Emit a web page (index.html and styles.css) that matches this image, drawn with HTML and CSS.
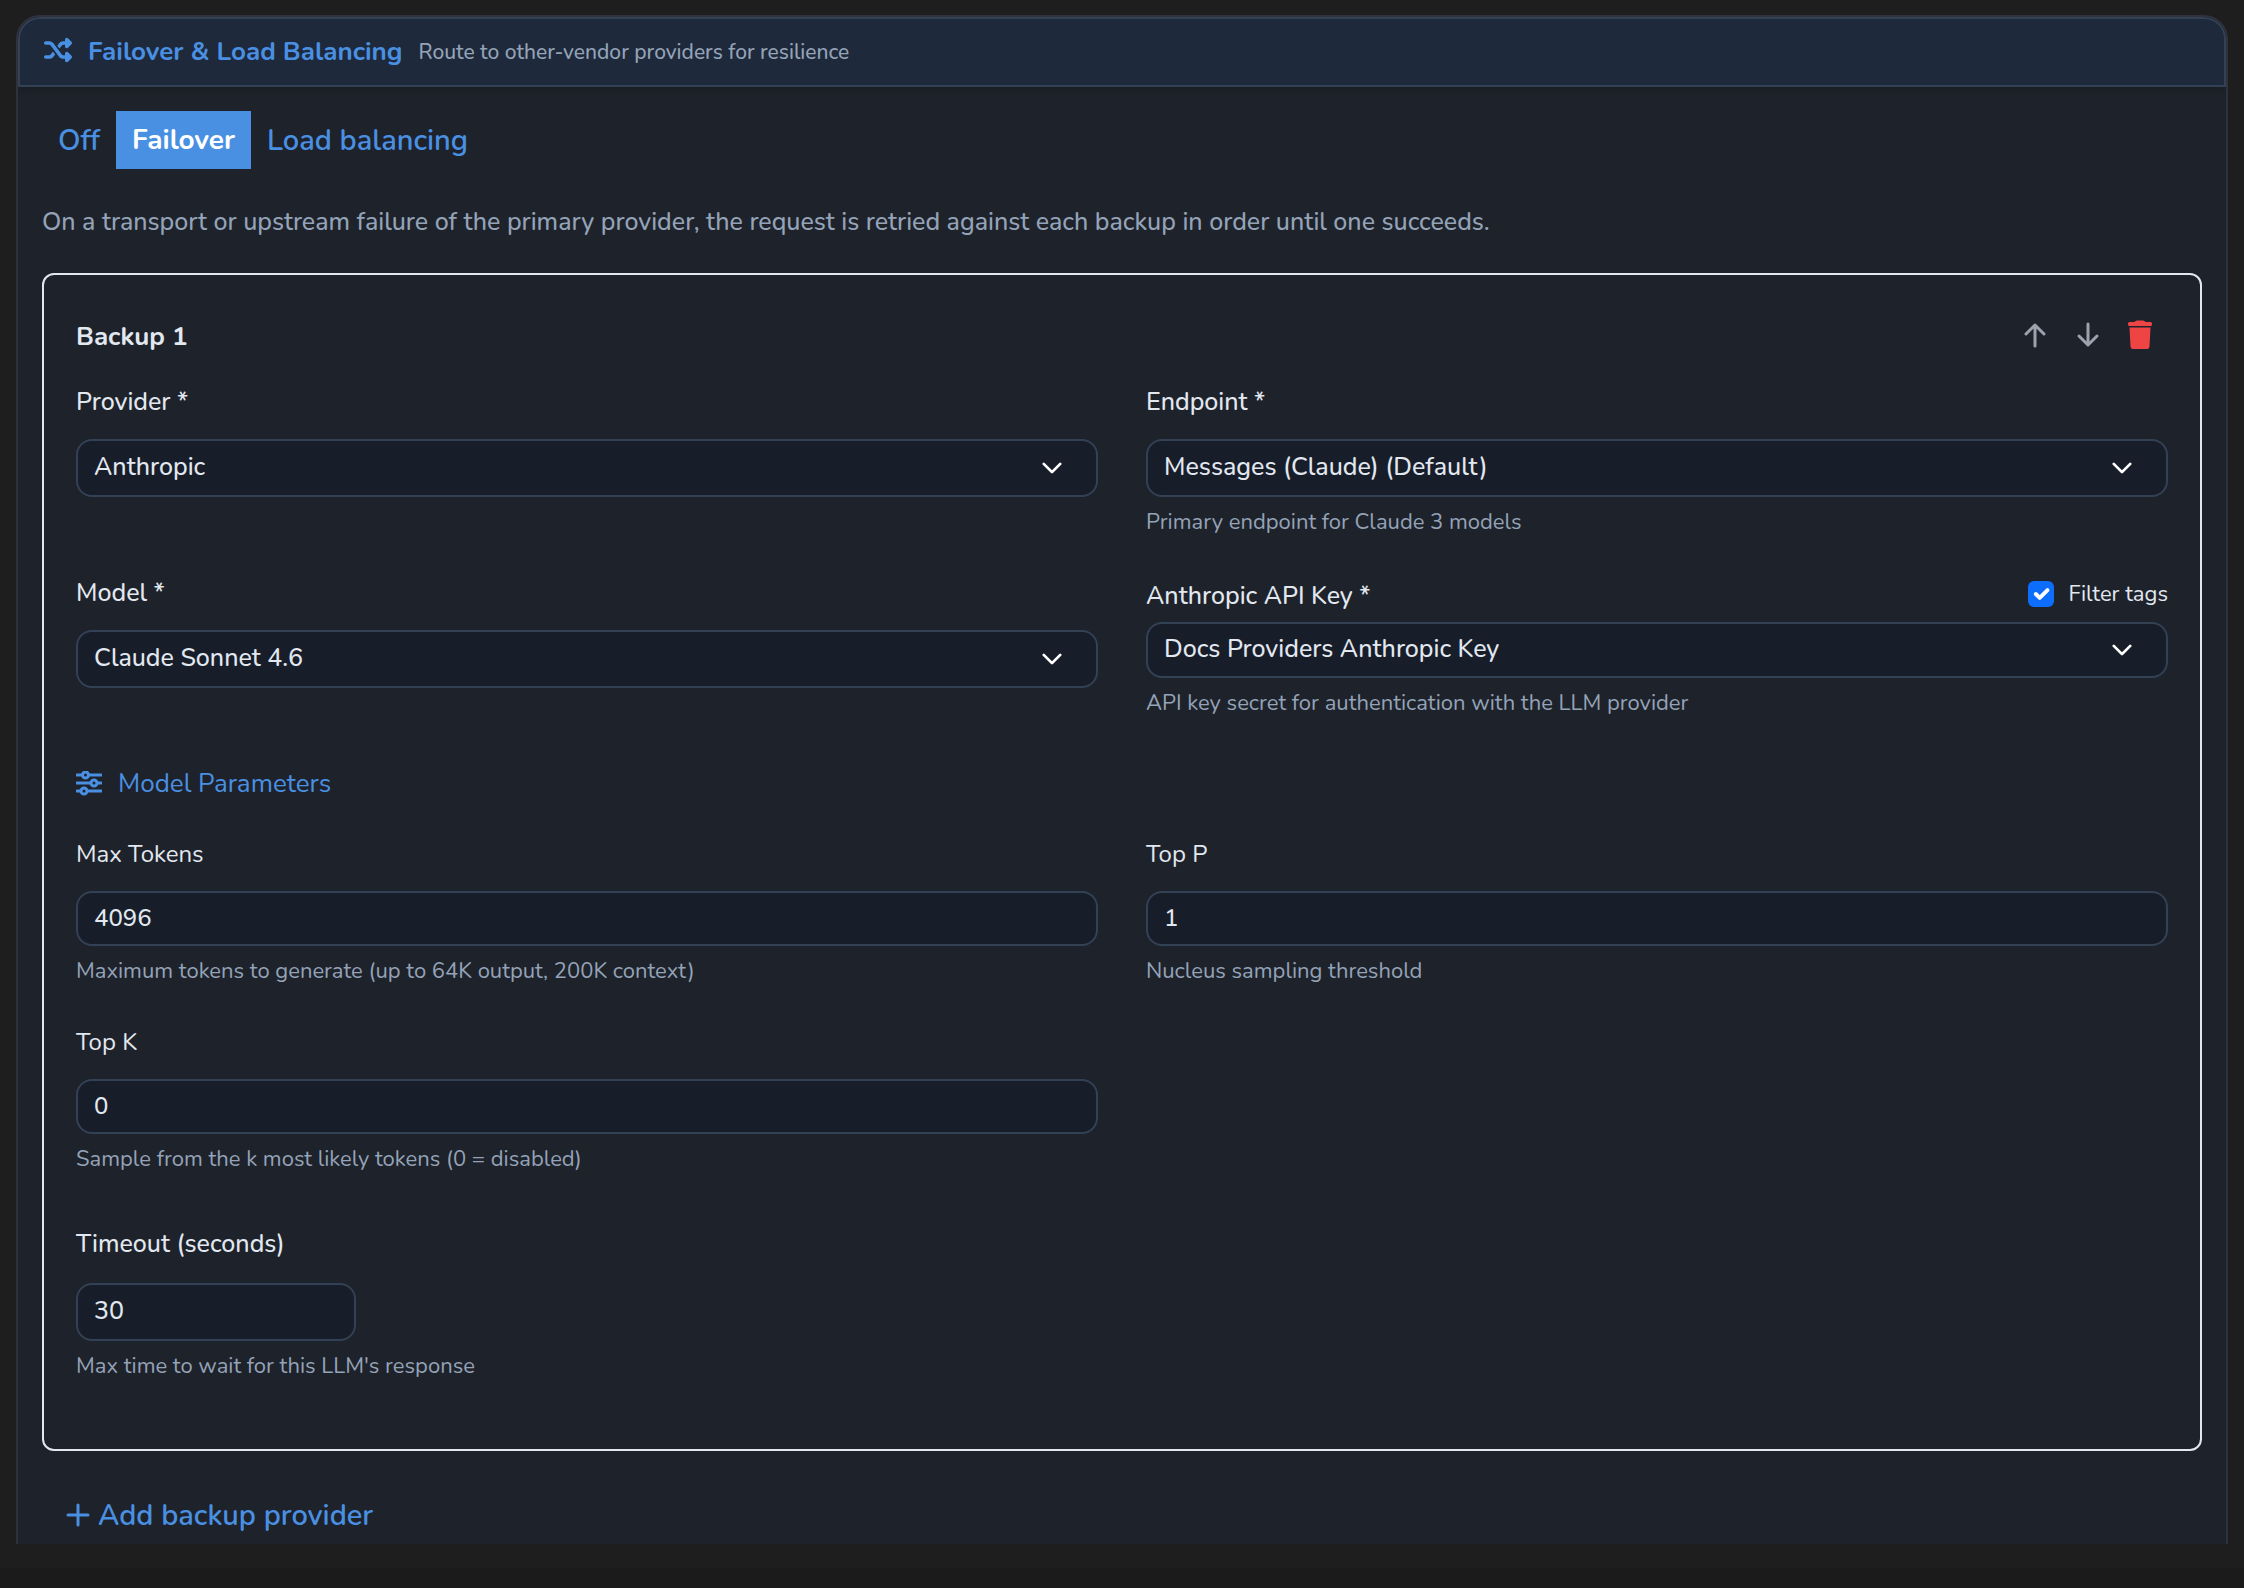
FILE: index.html
```html
<!DOCTYPE html>
<html lang="en">
<head>
    <meta charset="UTF-8">
    <meta name="viewport" content="width=device-width, initial-scale=1.0">
    <title>Failover &amp; Load Balancing</title>
    <link rel="stylesheet" href="styles.css">
</head>
<body>
    <main class="panel">
        <header class="panel-header">
            <svg class="icon-shuffle" viewBox="0 0 512 512" aria-hidden="true">
                <path fill="currentColor" d="M403.8 34.4c12-5 25.7-2.2 34.9 6.9l64 64c6 6 9.4 14.1 9.4 22.6s-3.4 16.6-9.4 22.6l-64 64c-9.2 9.2-22.9 11.9-34.9 6.9s-19.8-16.6-19.8-29.6V160H352c-10.1 0-19.6 4.7-25.6 12.8L284 229.3 244 176l31.2-41.6C293.3 110.2 321.8 96 352 96h32V64c0-12.9 7.8-24.6 19.8-29.6zM164 282.7L204 336l-31.2 41.6C154.7 401.8 126.2 416 96 416H32c-17.7 0-32-14.3-32-32s14.3-32 32-32H96c10.1 0 19.6-4.7 25.6-12.8L164 282.7zm274.6 188c-9.2 9.2-22.9 11.9-34.9 6.9s-19.8-16.6-19.8-29.6V416H352c-30.2 0-58.7-14.2-76.8-38.4L121.6 172.8c-6-8.1-15.5-12.8-25.6-12.8H32c-17.7 0-32-14.3-32-32s14.3-32 32-32H96c30.2 0 58.7 14.2 76.8 38.4L326.4 339.2c6 8.1 15.5 12.8 25.6 12.8h32V320c0-12.9 7.8-24.6 19.8-29.6s25.7-2.2 34.9 6.9l64 64c6 6 9.4 14.1 9.4 22.6s-3.4 16.6-9.4 22.6l-64 64z"/>
            </svg>
            <h1>Failover &amp; Load Balancing</h1>
            <span class="subtitle">Route to other-vendor providers for resilience</span>
        </header>

        <div class="panel-body">
            <div class="mode-tabs">
                <button type="button" class="mode-btn">Off</button>
                <button type="button" class="mode-btn active">Failover</button>
                <button type="button" class="mode-btn">Load balancing</button>
            </div>

            <p class="mode-description">On a transport or upstream failure of the primary provider, the request is retried against each backup in order until one succeeds.</p>

            <section class="backup-card">
                <div class="card-header">
                    <h2>Backup 1</h2>
                    <div class="card-actions">
                        <button type="button" class="icon-btn" aria-label="Move up">
                            <svg viewBox="0 0 28 28" aria-hidden="true"><path d="M14 25V4M5 13l9-9 9 9"/></svg>
                        </button>
                        <button type="button" class="icon-btn" aria-label="Move down">
                            <svg viewBox="0 0 28 28" aria-hidden="true"><path d="M14 3v21M5 15l9 9 9-9"/></svg>
                        </button>
                        <button type="button" class="icon-btn delete" aria-label="Delete backup">
                            <svg viewBox="0 0 26 30" aria-hidden="true"><path d="M2.500 2H7.500Q8.500.5 10 .5H16Q17.500.5 18.500 2H23.500Q25 2 25 3.500V4.500Q25 6 23.500 6H2.500Q1 6 1 4.500V3.500Q1 2 2.500 2ZM2.500 7.500H23.500L22.500 26.500Q22.300 29 20 29H6Q3.700 29 3.500 26.500Z"/></svg>
                        </button>
                    </div>
                </div>

                <form>
                    <div class="field-grid">
                        <div class="field">
                            <label for="provider">Provider *</label>
                            <select id="provider"><option>Anthropic</option></select>
                        </div>
                        <div class="field">
                            <label for="endpoint">Endpoint *</label>
                            <select id="endpoint"><option>Messages (Claude) (Default)</option></select>
                            <p class="help">Primary endpoint for Claude 3 models</p>
                        </div>
                        <div class="field">
                            <label for="model">Model *</label>
                            <select id="model"><option>Claude Sonnet 4.6</option></select>
                        </div>
                        <div class="field field-key">
                            <div class="label-row">
                                <label for="apiKey">Anthropic API Key *</label>
                                <div class="filter-tags">
                                    <input type="checkbox" id="filterTags" checked>
                                    <label for="filterTags">Filter tags</label>
                                </div>
                            </div>
                            <select id="apiKey"><option>Docs Providers Anthropic Key</option></select>
                            <p class="help">API key secret for authentication with the LLM provider</p>
                        </div>
                    </div>

                    <h3 class="section-title">
                        <svg viewBox="0 0 26 26" aria-hidden="true">
                            <path d="M1 4h5M13 4h12M1 12h13M22 12h3M1 20h3M12 20h13"/>
                            <circle cx="9.500" cy="4" r="3"/>
                            <circle cx="18" cy="12" r="3"/>
                            <circle cx="8" cy="20" r="3"/>
                        </svg>
                        Model Parameters
                    </h3>

                    <div class="field-grid params">
                        <div class="field">
                            <label for="maxTokens">Max Tokens</label>
                            <input type="text" id="maxTokens" value="4096">
                            <p class="help">Maximum tokens to generate (up to 64K output, 200K context)</p>
                        </div>
                        <div class="field">
                            <label for="topP">Top P</label>
                            <input type="text" id="topP" value="1">
                            <p class="help">Nucleus sampling threshold</p>
                        </div>
                        <div class="field">
                            <label for="topK">Top K</label>
                            <input type="text" id="topK" value="0">
                            <p class="help">Sample from the k most likely tokens (0 = disabled)</p>
                        </div>
                    </div>

                    <div class="field timeout">
                        <label for="timeout">Timeout (seconds)</label>
                        <input type="text" id="timeout" value="30">
                        <p class="help">Max time to wait for this LLM's response</p>
                    </div>
                </form>
            </section>

            <button type="button" class="add-btn">
                <svg viewBox="0 0 24 24" aria-hidden="true"><path d="M12 2v20M2 12h20"/></svg>
                Add backup provider
            </button>
        </div>
    </main>
    <footer class="bottom-bar"></footer>
</body>
</html>
```

FILE: styles.css
```css
* {
    box-sizing: border-box;
}

body {
    margin: 0;
    min-height: 100vh;
    display: flex;
    flex-direction: column;
    background: #1e1e1e;
    color: #e2e8f0;
    font-family: Nunito, Lato, sans-serif;
    font-size: 25px;
    font-weight: 500;
    line-height: 36px;
}

h1, h2, h3, p {
    margin: 0;
}

button, input, select {
    font-family: inherit;
    font-weight: inherit;
    color: inherit;
}

.panel {
    flex: 1;
    margin: 15px 16px 24px;
    background: #1e222a;
    border: 2px solid #2f323c;
    border-bottom: none;
    border-radius: 24px 24px 0 0;
    overflow: hidden;
}

.panel-header {
    display: flex;
    align-items: center;
    padding: 17px 24px;
    background: #1e293b;
    border: 2px solid #334155;
    border-radius: 22px 22px 0 0;
    box-shadow: 0 2px 8px rgba(0, 0, 0, 0.2);
}

.icon-shuffle {
    width: 28px;
    height: 28px;
    margin: 0 16px 4px 0;
    color: #4a90e2;
}

.panel-header h1 {
    font-size: 26px;
    line-height: 32px;
    font-weight: 700;
    color: #4a90e2;
}

.subtitle {
    margin-left: 16px;
    font-size: 21px;
    line-height: 32px;
    color: #94a3b8;
}

.panel-body {
    padding: 24px 24px 0;
}

.mode-tabs {
    display: flex;
}

.mode-btn {
    height: 58px;
    padding: 0 16px;
    border: none;
    background: none;
    color: #4a90e2;
    font-size: 29px;
    font-weight: 600;
    cursor: pointer;
}

.mode-btn.active {
    background: #4a90e2;
    color: #fff;
    font-size: 28px;
    font-weight: 700;
}

.mode-description {
    margin: 35px 0 33px;
    color: #94a3b8;
}

.backup-card {
    padding: 40px 32px 67px;
    border: 2px solid #e2e8f0;
    border-radius: 12px;
}

.card-header {
    display: flex;
    justify-content: space-between;
    align-items: center;
    margin-bottom: 29px;
}

.card-header h2 {
    padding-top: 4px;
    font-size: 26px;
    line-height: 36px;
    font-weight: 700;
}

.card-actions {
    display: flex;
    gap: 25px;
    padding-right: 15px;
}

.icon-btn {
    display: flex;
    padding: 0;
    border: none;
    background: none;
    color: #9ca3af;
    cursor: pointer;
}

.icon-btn svg {
    width: 28px;
    height: 30px;
    fill: none;
    stroke: currentColor;
    stroke-width: 3;
    stroke-linecap: round;
    stroke-linejoin: round;
}

.icon-btn.delete svg {
    width: 26px;
    fill: #ef4444;
    stroke: none;
}

.field-grid {
    display: grid;
    grid-template-columns: 1fr 1fr;
    gap: 37px 48px;
}

.field {
    display: flex;
    flex-direction: column;
}

.field > label {
    margin-bottom: 19px;
}

select,
input[type="text"] {
    width: 100%;
    height: 58px;
    padding: 0 16px 2px;
    border: 2px solid #334155;
    border-radius: 16px;
    background: #181d2a;
    font-size: 25px;
    appearance: none;
}

select {
    background-image: url("data:image/svg+xml,%3Csvg xmlns='http://www.w3.org/2000/svg' viewBox='0 0 16 16'%3E%3Cpath fill='none' stroke='%23fff' stroke-linecap='round' stroke-linejoin='round' stroke-width='2' d='m2 5 6 6 6-6'/%3E%3C/svg%3E");
    background-repeat: no-repeat;
    background-position: right 33px center;
    background-size: 22px 22px;
}

.help {
    margin-top: 9px;
    font-size: 22px;
    font-weight: 400;
    line-height: 32px;
    color: #94a3b8;
}

.label-row {
    display: flex;
    justify-content: space-between;
    align-items: flex-start;
    margin: 3px 0 8px;
}

.field-key select {
    height: 56px;
}

.filter-tags {
    display: flex;
    align-items: center;
    gap: 14px;
    font-size: 22px;
    font-weight: 400;
    line-height: 32px;
}

.filter-tags input {
    width: 26px;
    height: 26px;
    margin: 0;
    border-radius: 6px;
    appearance: none;
    background: #0d6efd url("data:image/svg+xml,%3Csvg xmlns='http://www.w3.org/2000/svg' viewBox='0 0 20 20'%3E%3Cpath fill='none' stroke='%23fff' stroke-linecap='round' stroke-linejoin='round' stroke-width='3' d='m6 10 3 3 6-6'/%3E%3C/svg%3E") center / 100% no-repeat;
}

.section-title {
    display: flex;
    align-items: center;
    gap: 16px;
    margin: 47px 0 34px;
    color: #4a90e2;
    font-size: 26px;
    font-weight: 400;
}

.section-title svg {
    width: 26px;
    height: 26px;
    fill: none;
    stroke: currentColor;
    stroke-width: 3;
    stroke-linecap: round;
}

.params label {
    font-size: 24px;
    font-weight: 400;
}

.params input[type="text"] {
    height: 55px;
    font-size: 24px;
}

.timeout {
    margin-top: 51px;
}

.timeout > label {
    margin-bottom: 21px;
}

.timeout input[type="text"] {
    width: 280px;
}

.add-btn {
    display: flex;
    align-items: center;
    gap: 8px;
    height: 58px;
    margin-top: 35px;
    padding: 0 24px;
    border: none;
    background: none;
    color: #4a90e2;
    font-size: 29px;
    font-weight: 600;
    cursor: pointer;
}

.add-btn svg {
    width: 24px;
    height: 24px;
    stroke: currentColor;
    stroke-width: 3;
    stroke-linecap: round;
}

.bottom-bar {
    height: 21px;
    background: #1b1b1b;
}
```
